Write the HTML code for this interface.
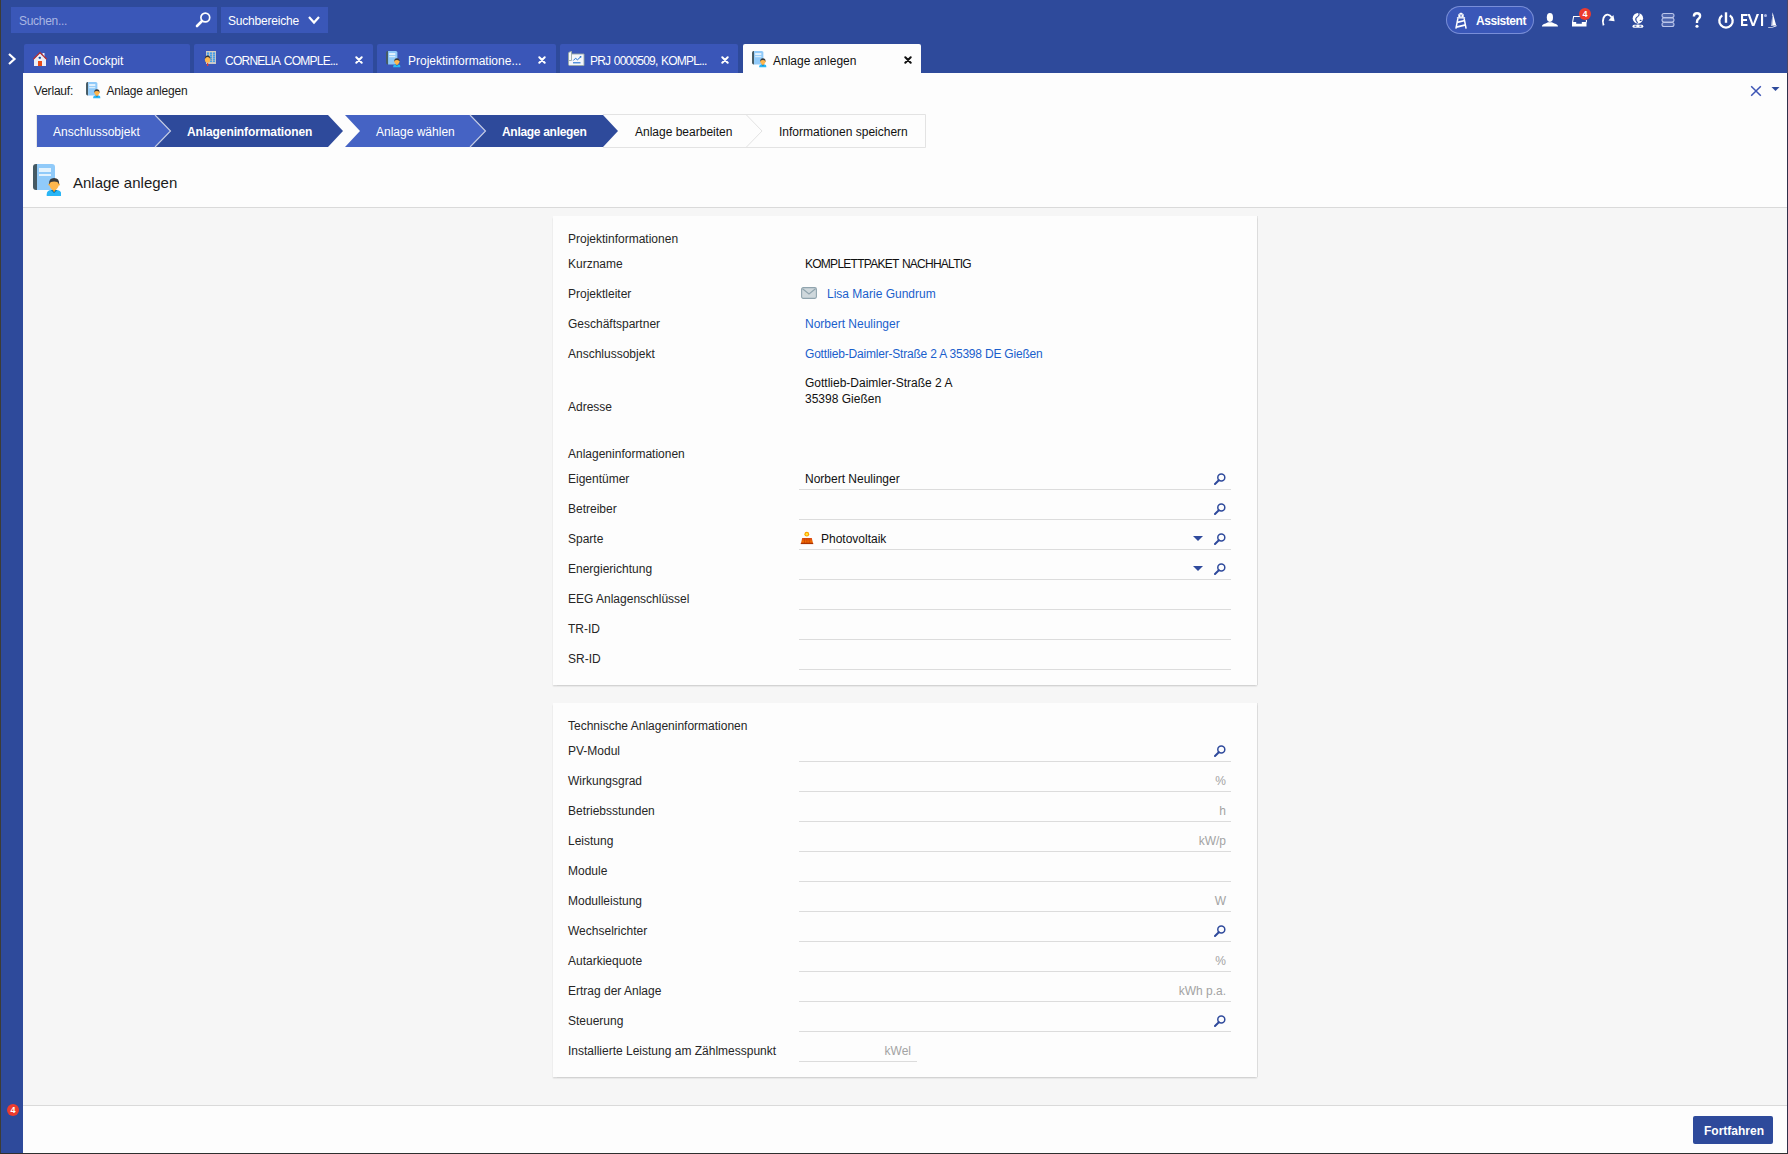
<!DOCTYPE html>
<html><head><meta charset="utf-8">
<style>
*{box-sizing:border-box;margin:0;padding:0}
html,body{width:1788px;height:1154px;overflow:hidden}
body{position:relative;background:#2E4A9B;font-family:"Liberation Sans",sans-serif;font-size:12px;color:#1b1b1b}
.a{position:absolute}
svg.a{overflow:visible}
.t{position:absolute;font-size:12px;line-height:14px;white-space:nowrap}
.w{color:#fff}
.edgeL{left:0;top:0;width:1px;height:1154px;background:#3d3c35}
.edgeR{left:1787px;top:0;width:1px;height:73px;background:#464669}
.edgeR2{left:1787px;top:73px;width:1px;height:1081px;background:#30304a}
.edgeB{left:0;top:1153px;width:1788px;height:1px;background:#2f2f2f}
.sbox{background:#3A57B8}
.tab{position:absolute;top:44px;height:29px;background:#3A56B8;border-radius:2px 2px 0 0}
.tab.act{background:#FDFDFD}
.content{left:23px;top:73px;width:1764px;height:1080px;background:#FDFDFD}
.gray{left:23px;top:208px;width:1764px;height:897px;background:#F6F6F6}
.sep{height:1px;background:#DADADA}
.card{position:absolute;background:#FDFDFD;box-shadow:0 1.5px 1.5px rgba(0,0,0,0.14),0.5px 0 0.5px rgba(0,0,0,0.07),-0.5px 0 0.5px rgba(0,0,0,0.04)}
.lab{position:absolute;left:568px;font-size:12px;line-height:14px;white-space:nowrap;color:#262626}
.val{position:absolute;left:805px;font-size:12px;line-height:14px;white-space:nowrap;color:#111}
.link{color:#1A5FCC}
.ul{position:absolute;left:799px;width:432px;height:1px;background:#DCDCDC}
.unit{position:absolute;right:562px;font-size:12px;line-height:14px;white-space:nowrap;color:#a3a3a3;text-align:right}
.ws{color:#fff;font-size:12px}
</style></head><body>
<svg width="0" height="0" style="position:absolute">
<defs>
<symbol id="docp" viewBox="0 0 28 32">
<path d="M3 0H4V26H3Q0 26 0 23V3Q0 0 3 0Z" fill="#455A64"/>
<path d="M4 0H19Q22 0 22 3V26H4Z" fill="#90CAF9"/>
<rect x="6" y="4" width="12" height="4" fill="#E3F2FD"/>
<rect x="6" y="10" width="12" height="2" fill="#E3F2FD"/>
<path d="M13.7 32V30.5Q13.7 26 18.5 26H23.5Q28.3 26 28.3 30.5V32Z" fill="#29B6F6"/>
<path d="M17.8 26L21.1 29.2L24.4 26Z" fill="#0277BD"/>
<path d="M19 24.5L21.1 28.2L23.2 24.5Z" fill="#FF9800"/>
<path d="M16.4 20.5Q16.4 16 21.1 16Q25.8 16 25.8 20.5Q25.8 23.5 23.6 25.2Q22.4 26.2 21.1 26.2Q19.8 26.2 18.6 25.2Q16.4 23.5 16.4 20.5Z" fill="#FFB74D"/>
<ellipse cx="16.2" cy="20.6" rx="0.8" ry="1.1" fill="#FFA726"/>
<ellipse cx="26" cy="20.6" rx="0.8" ry="1.1" fill="#FFA726"/>
<path d="M16.1 20Q15.7 14 21.1 14Q26.5 14 26.1 20L25.4 19.8Q25.2 17.4 21.1 17.4Q17 17.4 16.8 19.8Z" fill="#3a3a3a"/>
</symbol>
<symbol id="srch" viewBox="0 0 12 12">
<circle cx="7.3" cy="4.6" r="3.5" fill="none" stroke="#2F4A9C" stroke-width="1.5"/>
<path d="M1 11L4.8 7.2" stroke="#2F4A9C" stroke-width="2" stroke-linecap="round"/>
</symbol>
<symbol id="dd" viewBox="0 0 10 5"><path d="M0 0H10L5 5Z" fill="#2F4A9C"/></symbol>
<symbol id="xw" viewBox="0 0 8 8"><path d="M1.3 1.3L6.7 6.7M6.7 1.3L1.3 6.7" stroke="#fff" stroke-width="2" stroke-linecap="round"/></symbol>
<symbol id="xd" viewBox="0 0 8 8"><path d="M1.3 1.3L6.7 6.7M6.7 1.3L1.3 6.7" stroke="#111" stroke-width="2" stroke-linecap="round"/></symbol>
</defs>
</svg>
<div class="a edgeL"></div>

<!-- search -->
<div class="a sbox" style="left:11px;top:7px;width:206px;height:26px"></div>
<div class="t" style="left:19px;top:14px;color:#a9b6e3;letter-spacing:-0.3px">Suchen...</div>
<svg class="a" style="left:195px;top:12px" width="16" height="16" viewBox="0 0 16 16">
<circle cx="10.3" cy="5.5" r="4.4" fill="none" stroke="#fff" stroke-width="1.7"/>
<path d="M2 14L7 9" stroke="#fff" stroke-width="2.6" stroke-linecap="round"/>
</svg>
<div class="a sbox" style="left:221px;top:7px;width:107px;height:26px"></div>
<div class="t w" style="left:228px;top:14px;letter-spacing:-0.2px">Suchbereiche</div>
<svg class="a" style="left:307px;top:15px" width="14" height="10" viewBox="0 0 14 10">
<path d="M2 2L7 7.5L12 2" fill="none" stroke="#fff" stroke-width="2.2"/>
</svg>

<!-- top right -->
<div class="a" style="left:1446px;top:6px;width:88px;height:28px;border-radius:14px;background:#3A57B8;border:1px solid rgba(200,210,255,0.45)"></div>
<svg class="a" style="left:1455px;top:11.5px" width="12" height="17" viewBox="0 0 12 17">
<path d="M2.8 2.6L6 0.4L9.2 2.6Z" fill="#fff"/>
<path d="M3.3 2.5H8.7V5.2H3.3Z M5.3 3.3V4.5H6.8V3.3Z" fill="#fff" fill-rule="evenodd"/>
<rect x="1.9" y="5.2" width="8.2" height="1.3" fill="#fff"/>
<path d="M2.9 6.4L0.9 16.6M9.1 6.4L11.1 16.6" stroke="#fff" stroke-width="1.5"/>
<path d="M2.1 10.4L9.9 8.5M1.2 15.2L10.8 12.9" stroke="#fff" stroke-width="1.7"/>
</svg>
<div class="t w" style="left:1476px;top:14px;font-weight:bold;letter-spacing:-0.45px">Assistent</div>
<svg class="a" style="left:1541px;top:12px" width="18" height="16" viewBox="0 0 18 16">
<ellipse cx="8.9" cy="5.5" rx="3.1" ry="4.4" fill="#fff"/>
<path d="M0.9 14.6Q0.9 12.6 4.5 11.6L7 10.2H10.8L13.3 11.6Q17 12.6 17 14.6Z" fill="#fff"/>
</svg>
<svg class="a" style="left:1571px;top:15px" width="17" height="13" viewBox="0 0 17 13">
<path d="M1.6 7.2L2.6 1.5H9M15.4 5V7.2" fill="none" stroke="#fff" stroke-width="1.1"/>
<path d="M1 7H5.2V8.7H10.8V7H15.5V11.5H1Z" fill="#fff"/>
</svg>
<div class="a" style="left:1579px;top:8px;width:12px;height:12px;border-radius:6px;background:#EC3B2E"></div>
<div class="a" style="left:1579px;top:8px;width:12px;height:12px;line-height:12px;text-align:center;color:#fff;font-size:9px;font-weight:bold">4</div>
<svg class="a" style="left:1600px;top:13px" width="16" height="14" viewBox="0 0 16 14">
<path d="M3.6 12.4C1.6 6.8 4 1.4 7.8 1.6C9.6 1.7 10.8 2.8 11.8 4.4" fill="none" stroke="#fff" stroke-width="1.9"/>
<path d="M8.4 7.6L14.6 8.3L13.4 2Z" fill="#fff"/>
</svg>
<svg class="a" style="left:1631px;top:12px" width="14" height="17" viewBox="0 0 14 17">
<circle cx="6.9" cy="6.2" r="5.2" fill="#fff"/>
<path d="M7.6 1.2Q9 3 6.6 4.6Q4 6.2 5 8.3Q6 9.6 6.6 11.4" fill="none" stroke="#2E4A9B" stroke-width="1.1"/>
<ellipse cx="9.6" cy="8.4" rx="1" ry="0.7" fill="#2E4A9B"/>
<path d="M6.9 11.2V12.6" stroke="#fff" stroke-width="1"/>
<rect x="1.5" y="12.7" width="10.8" height="3.1" rx="1.5" fill="#fff"/>
<path d="M3.5 14.2H5.4M8.4 14.2H10.3" stroke="#2E4A9B" stroke-width="1"/>
</svg>
<svg class="a" style="left:1661px;top:12px" width="14" height="16" viewBox="0 0 14 16">
<g fill="rgba(190,200,235,0.22)" stroke="#bac5ea" stroke-width="1.1">
<rect x="1" y="1.5" width="12" height="4" rx="2"/>
<rect x="1" y="6" width="12" height="4" rx="2"/>
<rect x="1" y="10.5" width="12" height="4" rx="2"/>
</g>
</svg>
<svg class="a" style="left:1692px;top:12px" width="10" height="17" viewBox="0 0 10 17">
<path d="M1.9 4.4Q1.9 1.3 5 1.3Q8.1 1.3 8.1 4Q8.1 5.8 6.3 7Q5 7.9 5 9.8V10.9" fill="none" stroke="#fff" stroke-width="2.4"/>
<circle cx="5" cy="14.2" r="1.55" fill="#fff"/>
</svg>
<svg class="a" style="left:1716px;top:11px" width="20" height="18" viewBox="0 0 20 18">
<path d="M6.2 4.4A6.7 6.7 0 1 0 13.8 4.4" fill="none" stroke="#fff" stroke-width="2.3"/>
<path d="M10 1.3V11.8" stroke="#fff" stroke-width="2.4"/>
</svg>
<svg class="a" style="left:1740px;top:12px" width="24" height="16" viewBox="0 0 24 16">
<path d="M1 2H7.5V4H3.1V7H7V9H3.1V12H7.5V14H1Z" fill="#fff"/>
<path d="M7.5 2H9.8L13.2 11.5L16.6 2H19L14.4 14H12Z" fill="#fff"/>
<rect x="21" y="2" width="2.1" height="12" fill="#fff"/>
</svg>
<div class="a" style="left:1764px;top:14px;width:3.2px;height:3.2px;border-radius:2px;background:#a9b5e0"></div>
<svg class="a" style="left:1767px;top:11px" width="11" height="18" viewBox="0 0 11 18">
<path d="M5.6 1.2L9.2 14.5L4 14.8Q5 8 5.6 1.2Z" fill="#fff"/>
<path d="M5.4 5L4.8 14.3" stroke="#2E4A9B" stroke-width="0.6"/>
<path d="M1 16.6Q5 16.5 9.8 14.2L9.5 15.3Q5 17.3 1 16.9Z" fill="#fff"/>
</svg>

<!-- sidebar chevron -->
<svg class="a" style="left:7px;top:52px" width="10" height="14" viewBox="0 0 10 14">
<path d="M2 2L7.5 7L2 12" fill="none" stroke="#fff" stroke-width="2.2"/>
</svg>

<!-- tabs -->
<div class="tab" style="left:24px;width:166px"></div>
<svg class="a" style="left:33px;top:52px" width="14" height="14" viewBox="0 0 14 14">
<rect x="9.5" y="1" width="2" height="4" fill="#e8ecf8"/>
<path d="M1 7L7 1.2L13 7V14H1Z" fill="#eceef6"/>
<path d="M0.3 7.2L7 0.6L13.7 7.2" fill="none" stroke="#B83232" stroke-width="1.3"/>
<rect x="5.8" y="4.8" width="2" height="2" rx="0.4" fill="#0D47A1"/>
<rect x="5" y="9" width="4" height="5" fill="#E64A19"/>
</svg>
<div class="t w" style="left:54px;top:54px">Mein Cockpit</div>

<div class="tab" style="left:194px;width:179px"></div>
<svg class="a" style="left:204px;top:50px" width="13" height="17" viewBox="0 0 13 17">
<rect x="2" y="1" width="10" height="13" fill="#C9C9C9"/><rect x="2" y="1" width="10" height="0.8" fill="#D8D0BE"/>
<g fill="#1E90F0"><rect x="2.9" y="2.6" width="2.2" height="1.05" rx="0.5"/><rect x="2.9" y="4.6" width="2.2" height="1.05" rx="0.5"/><rect x="5.9" y="2.6" width="2.2" height="1.05" rx="0.5"/><rect x="5.9" y="4.6" width="2.2" height="1.05" rx="0.5"/><rect x="5.9" y="6.6" width="2.2" height="1.05" rx="0.5"/><rect x="5.9" y="8.6" width="2.2" height="1.05" rx="0.5"/><rect x="5.9" y="10.6" width="2.2" height="1.05" rx="0.5"/><rect x="8.9" y="2.6" width="2.2" height="1.05" rx="0.5"/><rect x="8.9" y="4.6" width="2.2" height="1.05" rx="0.5"/><rect x="8.9" y="6.6" width="2.2" height="1.05" rx="0.5"/><rect x="8.9" y="8.6" width="2.2" height="1.05" rx="0.5"/><rect x="8.9" y="10.6" width="2.2" height="1.05" rx="0.5"/></g>
<ellipse cx="3.6" cy="9.5" rx="2.7" ry="3.2" fill="#FFB74D"/>
<path d="M0.9 9Q0.7 5.5 3.6 5.5Q6.5 5.5 6.3 9Q5.5 7 3.6 7Q1.7 7 0.9 9Z" fill="#333"/>
<path d="M3.1 13H4.1L4.3 16H2.9Z" fill="#E53935"/>
</svg>
<div class="t w" style="left:225px;top:54px;letter-spacing:-0.76px;word-spacing:1.6px">CORNELIA COMPLE...</div>
<svg class="a" style="left:355px;top:56px" width="8" height="8"><use href="#xw"/></svg>

<div class="tab" style="left:377px;width:179px"></div>
<svg class="a" style="left:386px;top:51px" width="14.5" height="16.5"><use href="#docp"/></svg>
<div class="t w" style="left:408px;top:54px">Projektinformatione...</div>
<svg class="a" style="left:538px;top:56px" width="8" height="8"><use href="#xw"/></svg>

<div class="tab" style="left:560px;width:178px"></div>
<svg class="a" style="left:568px;top:51px" width="16" height="15" viewBox="0 0 16 15">
<path d="M0.5 2Q1 0.5 3.5 0.5V3H16V14.5H1.5Q0.5 14.5 0.5 13Z" fill="#f4f6fb" stroke="#9aa9a6" stroke-width="0.9"/>
<path d="M3.5 0.5V9.5H0.8" fill="none" stroke="#9aa9a6" stroke-width="0.9"/>
<path d="M5.3 9.5L7.5 7.3L9.5 8.8L12.5 6" fill="none" stroke="#1E6FD0" stroke-width="1"/>
<circle cx="12.6" cy="5.8" r="0.9" fill="#1E6FD0"/>
<path d="M5 11.8H12.5" stroke="#1E6FD0" stroke-width="1.1"/>
</svg>
<div class="t w" style="left:590px;top:54px;letter-spacing:-0.8px;word-spacing:1px">PRJ 0000509, KOMPL...</div>
<svg class="a" style="left:721px;top:56px" width="8" height="8"><use href="#xw"/></svg>

<div class="tab act" style="left:743px;width:178px"></div>
<svg class="a" style="left:752px;top:51px" width="14.5" height="16.5"><use href="#docp"/></svg>
<div class="t" style="left:773px;top:54px;color:#111">Anlage anlegen</div>
<svg class="a" style="left:904px;top:56px" width="8" height="8"><use href="#xd"/></svg>

<!-- content -->
<div class="a content"></div>
<div class="a gray"></div>
<div class="a sep" style="left:23px;top:207px;width:1764px"></div>
<div class="a sep" style="left:23px;top:1105px;width:1764px"></div>

<div class="t" style="left:34px;top:84px;letter-spacing:-0.2px">Verlauf:</div>
<svg class="a" style="left:86px;top:82px" width="14.5" height="16.5"><use href="#docp"/></svg>
<div class="t" style="left:106.5px;top:84px;letter-spacing:-0.17px">Anlage anlegen</div>
<svg class="a" style="left:1750px;top:85px" width="12" height="12" viewBox="0 0 12 12">
<path d="M1.2 1.2L10.8 10.8M10.8 1.2L1.2 10.8" stroke="#3C54B5" stroke-width="1.5"/>
</svg>
<svg class="a" style="left:1771px;top:86px" width="9" height="6" viewBox="0 0 9 6"><path d="M0.5 1H8.5L4.5 5Z" fill="#2E4A9B"/></svg>

<!-- wizard -->
<svg class="a" style="left:0;top:0" width="1000" height="160" viewBox="0 0 1000 160">
<path d="M603 114.5H925.5V147.5H603" fill="none" stroke="#E3E3E3" stroke-width="1"/>
<path d="M36.5 114.5V147.5" stroke="#E6E6E6"/>
<path d="M37 115H155L170.5 131L155 147H37Z" fill="#4563C4"/>
<path d="M155 115H328L343 131L328 147H155L170.5 131Z" fill="#2E4A9B"/>
<path d="M155 115L170.5 131L155 147" fill="none" stroke="#C4CBE3" stroke-width="1.1"/>
<path d="M345 115H470L485.5 131L470 147H345L360 131Z" fill="#4563C4"/>
<path d="M470 115H603L618 131L603 147H470L485.5 131Z" fill="#2E4A9B"/>
<path d="M470 115L485.5 131L470 147" fill="none" stroke="#C4CBE3" stroke-width="1.1"/>
<path d="M746.5 115L762 131L746.5 147" fill="none" stroke="#E3E3E3" stroke-width="1"/>
</svg>
<div class="t w" style="left:53px;top:125px">Anschlussobjekt</div>
<div class="t w" style="left:187px;top:125px;font-weight:bold;letter-spacing:-0.1px">Anlageninformationen</div>
<div class="t w" style="left:376px;top:125px">Anlage wählen</div>
<div class="t w" style="left:502px;top:125px;font-weight:bold;letter-spacing:-0.3px">Anlage anlegen</div>
<div class="t" style="left:635px;top:125px;color:#111">Anlage bearbeiten</div>
<div class="t" style="left:779px;top:125px;color:#111">Informationen speichern</div>

<svg class="a" style="left:33px;top:164px" width="28" height="32"><use href="#docp"/></svg>
<div class="t" style="left:73px;top:174px;font-size:15px;line-height:18px">Anlage anlegen</div>

<!-- card 1 -->
<div class="card" style="left:553px;top:216px;width:704px;height:469px"></div>
<div class="lab" style="top:232px">Projektinformationen</div>
<div class="lab" style="top:257px">Kurzname</div>
<div class="val" style="top:257px;letter-spacing:-0.74px;word-spacing:1px">KOMPLETTPAKET NACHHALTIG</div>
<div class="lab" style="top:287px">Projektleiter</div>
<svg class="a" style="left:801px;top:287px" width="16" height="12" viewBox="0 0 16 12">
<rect x="0.6" y="0.6" width="14.8" height="10.8" rx="1.6" fill="#CFD8DC" stroke="#90A4AE" stroke-width="1.1"/>
<path d="M1.5 1.8L8 7L14.5 1.8" fill="none" stroke="#90A4AE" stroke-width="1.1"/>
</svg>
<div class="val link" style="left:827px;top:287px">Lisa Marie Gundrum</div>
<div class="lab" style="top:317px">Geschäftspartner</div>
<div class="val link" style="top:317px">Norbert Neulinger</div>
<div class="lab" style="top:347px">Anschlussobjekt</div>
<div class="val link" style="top:347px;letter-spacing:-0.2px">Gottlieb-Daimler-Straße 2 A 35398 DE Gießen</div>
<div class="val" style="top:376px">Gottlieb-Daimler-Straße 2 A</div>
<div class="val" style="top:392px">35398 Gießen</div>
<div class="lab" style="top:400px">Adresse</div>

<div class="lab" style="top:447px">Anlageninformationen</div>
<div class="lab" style="top:472px">Eigentümer</div>
<div class="val" style="top:472px">Norbert Neulinger</div>
<div class="ul" style="top:489px"></div>
<svg class="a" style="left:1214px;top:473px" width="12" height="12"><use href="#srch"/></svg>
<div class="lab" style="top:502px">Betreiber</div>
<div class="ul" style="top:519px"></div>
<svg class="a" style="left:1214px;top:503px" width="12" height="12"><use href="#srch"/></svg>
<div class="lab" style="top:532px">Sparte</div>
<svg class="a" style="left:800px;top:531px" width="14" height="14" viewBox="0 0 14 14">
<circle cx="6.8" cy="3.2" r="2.4" fill="#FFA000"/>
<circle cx="6.8" cy="3.2" r="1.2" fill="#FFEB3B"/>
<defs><linearGradient id="pvg" x1="0" y1="0" x2="0" y2="1"><stop offset="0" stop-color="#D84315"/><stop offset="0.6" stop-color="#EF6C00"/><stop offset="1" stop-color="#BF360C"/></linearGradient></defs><path d="M2.2 7H11.8L13.2 13H0.8Z" fill="url(#pvg)"/>
<path d="M4.8 7.2L4.4 12.8M6.9 7.2V12.8M9 7.2L9.4 12.8" stroke="#C43E00" stroke-width="0.7"/>
<path d="M0.8 12.6H13.2" stroke="#A83300" stroke-width="1"/>
</svg>
<div class="val" style="left:821px;top:532px">Photovoltaik</div>
<div class="ul" style="top:549px"></div>
<svg class="a" style="left:1193px;top:536px" width="10" height="5"><use href="#dd"/></svg>
<svg class="a" style="left:1214px;top:533px" width="12" height="12"><use href="#srch"/></svg>
<div class="lab" style="top:562px">Energierichtung</div>
<div class="ul" style="top:579px"></div>
<svg class="a" style="left:1193px;top:566px" width="10" height="5"><use href="#dd"/></svg>
<svg class="a" style="left:1214px;top:563px" width="12" height="12"><use href="#srch"/></svg>
<div class="lab" style="top:592px">EEG Anlagenschlüssel</div>
<div class="ul" style="top:609px"></div>
<div class="lab" style="top:622px">TR-ID</div>
<div class="ul" style="top:639px"></div>
<div class="lab" style="top:652px">SR-ID</div>
<div class="ul" style="top:669px"></div>

<!-- card 2 -->
<div class="card" style="left:553px;top:703px;width:704px;height:374px"></div>
<div class="lab" style="top:719px">Technische Anlageninformationen</div>
<div class="lab" style="top:744px">PV-Modul</div>
<div class="ul" style="top:761px"></div>
<svg class="a" style="left:1214px;top:745px" width="12" height="12"><use href="#srch"/></svg>
<div class="lab" style="top:774px">Wirkungsgrad</div>
<div class="ul" style="top:791px"></div>
<div class="unit" style="top:774px">%</div>
<div class="lab" style="top:804px">Betriebsstunden</div>
<div class="ul" style="top:821px"></div>
<div class="unit" style="top:804px">h</div>
<div class="lab" style="top:834px">Leistung</div>
<div class="ul" style="top:851px"></div>
<div class="unit" style="top:834px">kW/p</div>
<div class="lab" style="top:864px">Module</div>
<div class="ul" style="top:881px"></div>
<div class="lab" style="top:894px">Modulleistung</div>
<div class="ul" style="top:911px"></div>
<div class="unit" style="top:894px">W</div>
<div class="lab" style="top:924px">Wechselrichter</div>
<div class="ul" style="top:941px"></div>
<svg class="a" style="left:1214px;top:925px" width="12" height="12"><use href="#srch"/></svg>
<div class="lab" style="top:954px">Autarkiequote</div>
<div class="ul" style="top:971px"></div>
<div class="unit" style="top:954px">%</div>
<div class="lab" style="top:984px">Ertrag der Anlage</div>
<div class="ul" style="top:1001px"></div>
<div class="unit" style="top:984px">kWh p.a.</div>
<div class="lab" style="top:1014px">Steuerung</div>
<div class="ul" style="top:1031px"></div>
<svg class="a" style="left:1214px;top:1015px" width="12" height="12"><use href="#srch"/></svg>
<div class="lab" style="top:1044px">Installierte Leistung am Zählmesspunkt</div>
<div class="ul" style="top:1061px;width:118px"></div>
<div class="unit" style="top:1044px;right:877px">kWel</div>

<!-- footer -->
<div class="a" style="left:7px;top:1104px;width:12px;height:12px;border-radius:6px;background:#EC3B2E"></div>
<div class="a" style="left:7px;top:1104px;width:12px;height:12px;line-height:12px;text-align:center;color:#fff;font-size:9px;font-weight:bold">4</div>
<div class="a" style="left:1693px;top:1116px;width:80px;height:28px;background:#2E4A9B;border-radius:2px"></div>
<div class="t w" style="left:1704px;top:1124px;font-weight:bold">Fortfahren</div>

<div class="a edgeR"></div><div class="a edgeR2"></div>
<div class="a edgeB"></div>
</body></html>
